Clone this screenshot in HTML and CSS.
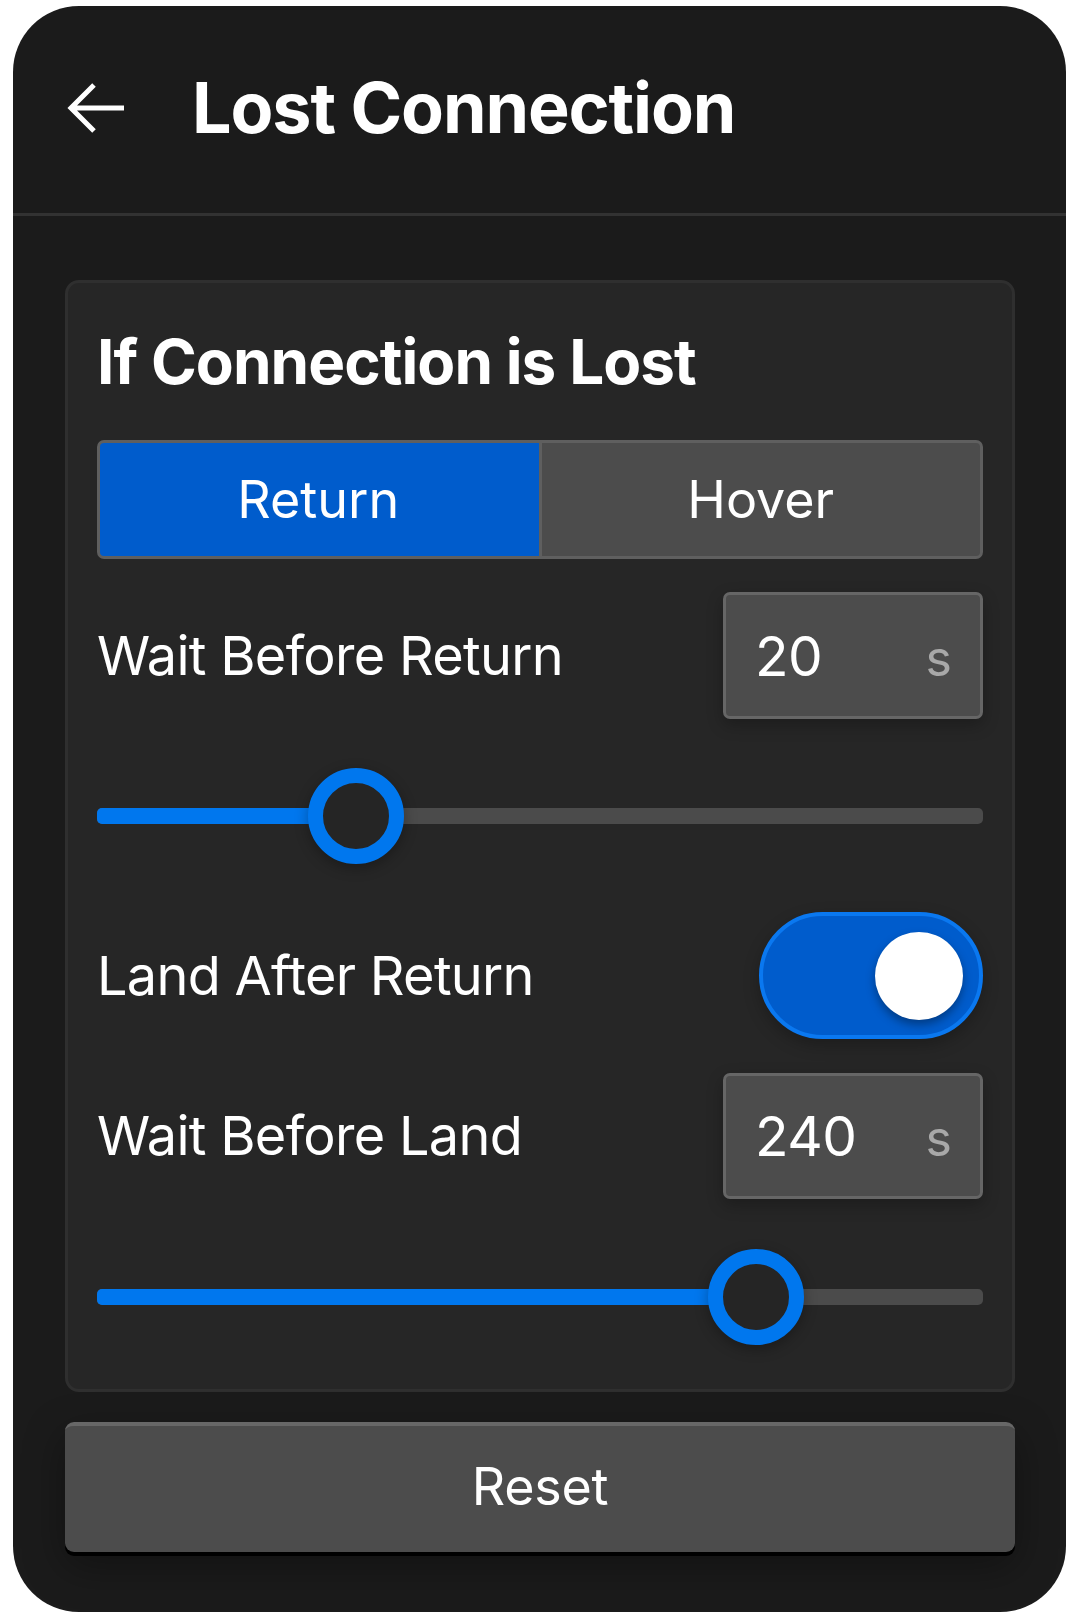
FILE: index.html
```html
<!DOCTYPE html>
<html lang="en">
<head>
<meta charset="utf-8">
<title>Lost Connection</title>
<link rel="stylesheet" href="styles.css">
</head>
<body>
<div class="panel">
  <header class="header">
    <svg class="back" width="64" height="60" viewBox="0 0 64 60" aria-hidden="true">
      <path d="M59 30 H6 M29 7 L6 30 L29 53" fill="none" stroke="#ffffff" stroke-width="5" stroke-linejoin="miter"/>
    </svg>
    <h1 class="title">Lost Connection</h1>
  </header>
  <main class="content">
    <section class="card">
      <h2 class="card-title">If Connection is Lost</h2>
      <div class="segmented">
        <div class="seg seg-active">Return</div>
        <div class="seg">Hover</div>
      </div>
      <div class="row row-first">
        <span class="label">Wait Before Return</span>
        <div class="field"><span class="value">20</span><span class="unit">s</span></div>
      </div>
      <div class="slider">
        <div class="track"></div>
        <div class="fill" style="width:29.2%"></div>
        <div class="thumb" style="left:29.2%"></div>
      </div>
      <div class="row row-toggle">
        <span class="label">Land After Return</span>
        <div class="toggle"><div class="knob"></div></div>
      </div>
      <div class="row row-land">
        <span class="label">Wait Before Land</span>
        <div class="field"><span class="value">240</span><span class="unit">s</span></div>
      </div>
      <div class="slider slider-last">
        <div class="track"></div>
        <div class="fill" style="width:74.4%"></div>
        <div class="thumb" style="left:74.4%"></div>
      </div>
    </section>
    <button class="reset" type="button">Reset</button>
  </main>
</div>
</body>
</html>
```

FILE: styles.css
```css
html, body {
  margin: 0;
  padding: 0;
  background: #ffffff;
}

body {
  font-family: Inter, "Noto Sans", "Liberation Sans", sans-serif;
  color: #ffffff;
}

.panel {
  box-sizing: border-box;
  width: 1053px;
  height: 1606px;
  margin: 6px 14px 4px 13px;
  background: #1b1b1b;
  border-radius: 66px;
  overflow: hidden;
  display: flex;
  flex-direction: column;
}

.header {
  box-sizing: border-box;
  height: 210px;
  padding: 0 0 3px 52px;
  display: flex;
  align-items: center;
  border-bottom: 3px solid #323232;
}

.back {
  display: block;
  flex: none;
}

.title {
  margin: 0 0 0 63px;
  font-size: 70px;
  line-height: 80px;
  font-weight: 700;
  letter-spacing: -1.1px;
}

.content {
  padding: 64px 51px 0 52px;
  display: flex;
  flex-direction: column;
}

.card {
  box-sizing: border-box;
  width: 950px;
  background: #262626;
  border: 3px solid #2f2f2f;
  border-radius: 14px;
  padding: 44px 29px 44px 29px;
  display: flex;
  flex-direction: column;
}

.card-title {
  margin: 0;
  font-size: 62px;
  line-height: 70px;
  font-weight: 700;
  letter-spacing: -0.95px;
}

.segmented {
  margin-top: 43px;
  box-sizing: border-box;
  height: 119px;
  display: grid;
  grid-template-columns: 1fr 1fr;
  gap: 3px;
  background: #5f5f5f;
  border: 3px solid #5f5f5f;
  border-radius: 7px;
  overflow: hidden;
}

.seg {
  background: #4c4c4c;
  display: flex;
  align-items: center;
  justify-content: center;
  font-size: 52px;
  line-height: 60px;
}

.seg-active {
  background: #005ccc;
  padding-right: 2px;
}

.row {
  height: 127px;
  display: flex;
  align-items: center;
  justify-content: space-between;
}

.row-first { margin-top: 33px; }
.row-toggle { margin-top: 48px; }
.row-land { margin-top: 34px; height: 126px; }

.label {
  font-size: 54px;
  line-height: 64px;
  font-weight: 400;
  letter-spacing: -0.7px;
}

.field {
  box-sizing: border-box;
  width: 260px;
  height: 100%;
  background: #4c4c4c;
  border: 3px solid #666666;
  border-radius: 7px;
  padding: 0 28px 0 29px;
  display: flex;
  align-items: center;
  justify-content: space-between;
  box-shadow: 0 6px 16px rgba(0, 0, 0, 0.25);
}

.value {
  font-size: 55px;
  line-height: 64px;
  letter-spacing: -0.5px;
}

.unit {
  font-size: 50px;
  line-height: 64px;
  color: #a8a8a8;
  padding-top: 4px;
}

.slider {
  position: relative;
  margin-top: 49px;
  height: 96px;
}

.slider-last {
  margin-top: 50px;
}

.track {
  position: absolute;
  left: 0;
  right: 0;
  top: 40px;
  height: 16px;
  border-radius: 5px;
  background: #4b4b4b;
}

.fill {
  position: absolute;
  left: 0;
  top: 40px;
  height: 16px;
  border-radius: 5px;
  background: #0077ee;
}

.thumb {
  position: absolute;
  top: 0;
  box-sizing: border-box;
  width: 96px;
  height: 96px;
  margin-left: -48px;
  border-radius: 50%;
  border: 15px solid #0077ee;
  background: #252525;
  box-shadow: 0 4px 14px rgba(0, 0, 0, 0.3);
}

.toggle {
  box-sizing: border-box;
  width: 224px;
  height: 127px;
  border-radius: 64px;
  background: #005ccc;
  border: 4px solid #0a78f0;
  display: flex;
  align-items: center;
  justify-content: flex-end;
  padding-right: 16px;
  box-shadow: 0 6px 16px rgba(0, 0, 0, 0.25);
}

.knob {
  width: 88px;
  height: 88px;
  border-radius: 50%;
  background: #ffffff;
  box-shadow: 0 5px 10px rgba(0, 0, 0, 0.35);
}

.reset {
  margin-top: 30px;
  box-sizing: border-box;
  width: 950px;
  height: 130px;
  border: none;
  border-top: 4px solid #676767;
  border-radius: 9px;
  background: #4c4c4c;
  color: #ffffff;
  font-family: Inter, "Noto Sans", "Liberation Sans", sans-serif;
  font-size: 52px;
  line-height: 60px;
  font-weight: 400;
  letter-spacing: -0.3px;
  padding: 0 0 4px 0;
  box-shadow: 0 4px 0 #000000, 0 14px 40px rgba(0, 0, 0, 0.35);
}
```
